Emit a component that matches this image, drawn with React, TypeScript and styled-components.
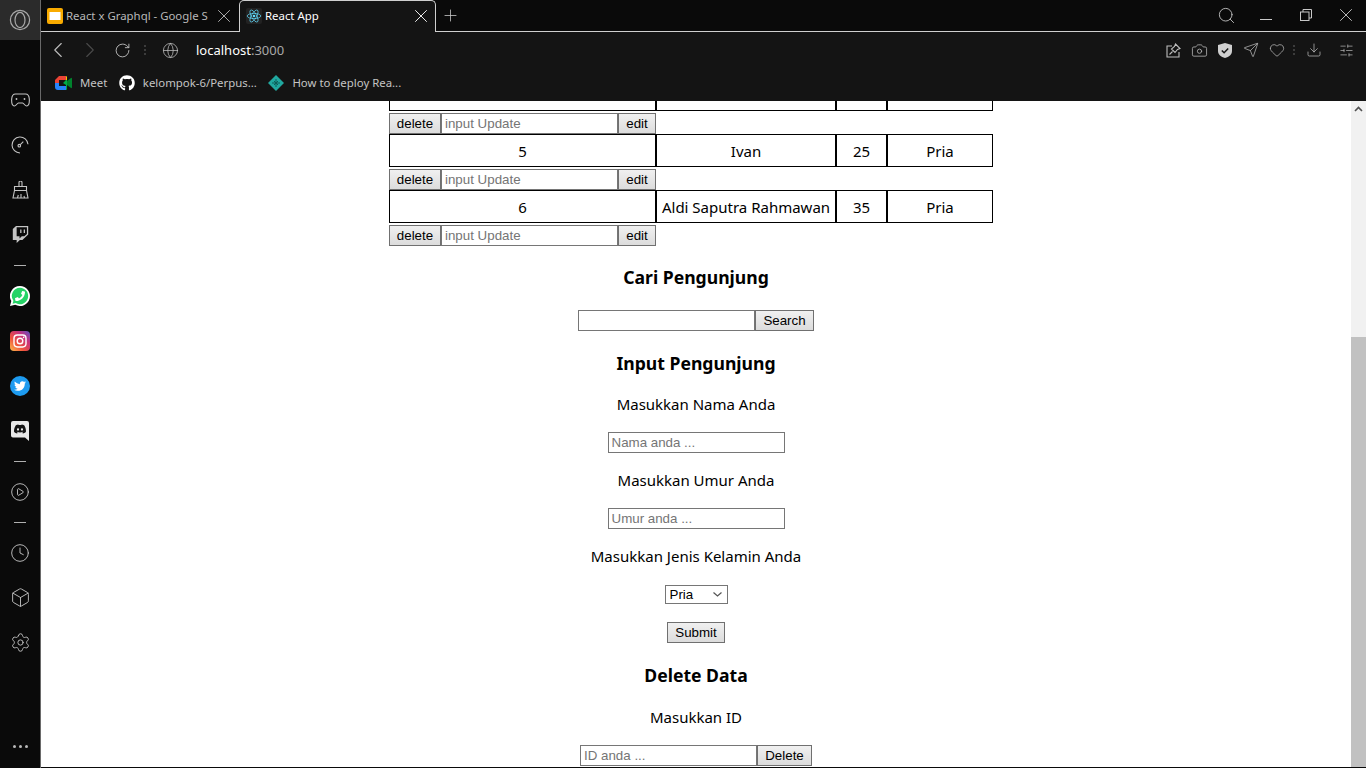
import styled, { createGlobalStyle } from 'styled-components';
import { Fragment } from 'react';
import { ChevronLeft, ChevronRight, RotateCw, Globe, Search, X, Plus, Camera, Send, Heart, Download, SlidersHorizontal, CirclePlay, Clock, Box, Settings } from 'lucide-react';
import { FaGithub, FaTwitch, FaPhoneAlt, FaTwitter, FaDiscord } from 'react-icons/fa';

const GlobalStyle = createGlobalStyle`
  html, body { margin: 0; padding: 0; overflow: hidden; background: #0a0a0a; }
  * { box-sizing: border-box; }
`;

const uiFont = `"Noto Sans", "Open Sans", sans-serif`;
const formFont = `"Liberation Sans", Arial, sans-serif`;

const Frame = styled.div`
  display: flex;
  width: 1366px;
  height: 768px;
  background: #0a0a0a;
  overflow: hidden;
`;

const Sidebar = styled.nav`
  display: flex;
  flex-direction: column;
  align-items: center;
  flex: 0 0 41px;
  height: 768px;
  color: #c4c4c4;
  border-right: 1px solid #6a6a6a;
`;

const LogoBox = styled.div`
  display: flex;
  align-items: center;
  justify-content: center;
  width: 40px;
  height: 40px;
  flex: none;
  margin-bottom: 37px;
  background: #2b2b2b;
`;

const SideSlot = styled.div`
  display: flex;
  align-items: center;
  justify-content: center;
  height: 45px;
  flex: none;
`;

const SideRule = styled.div`
  flex: none;
  height: 16px;
  display: flex;
  align-items: center;
  &::before {
    content: '';
    width: 12px;
    height: 1px;
    background: #b0b0b0;
  }
`;

const SideDots = styled.div`
  display: flex;
  gap: 3px;
  margin-top: auto;
  margin-bottom: 20px;
  & > i {
    width: 3px;
    height: 3px;
    border-radius: 50%;
    background: #b8b8b8;
  }
`;

const Main = styled.div`
  display: flex;
  flex-direction: column;
  flex: 1;
  min-width: 0;
`;

const TabStrip = styled.div`
  display: flex;
  align-items: flex-start;
  height: 31px;
  flex: none;
  background: #0a0a0a;
`;

const Tab = styled.div<{ $active?: boolean }>`
  display: flex;
  align-items: center;
  gap: 3px;
  width: 197px;
  height: ${(p) => (p.$active ? '32px' : '31px')};
  flex: none;
  padding: 0 3px ${(p) => (p.$active ? '2px' : '0')} 6px;
  margin-left: ${(p) => (p.$active ? '1px' : '0')};
  font: 11.4px/16px ${uiFont};
  color: ${(p) => (p.$active ? '#ffffff' : '#b8b8b8')};
  position: relative;
  z-index: 1;
  background: ${(p) => (p.$active ? '#141414' : 'transparent')};
  border: ${(p) => (p.$active ? '1px solid #cfcfcf' : 'none')};
  border-bottom: none;
  border-radius: ${(p) => (p.$active ? '5px 5px 0 0' : '0')};
`;

const TabTitle = styled.span`
  flex: 1;
  min-width: 0;
  overflow: hidden;
  white-space: nowrap;
`;

const NewTab = styled.div`
  display: flex;
  align-items: center;
  justify-content: center;
  width: 28px;
  height: 30px;
  color: #c8c8c8;
`;

const WindowButtons = styled.div`
  display: flex;
  height: 30px;
  margin-left: auto;
  color: #c8c8c8;
`;

const WindowSlot = styled.div`
  display: flex;
  align-items: center;
  justify-content: center;
  width: 40px;
  height: 30px;
`;

const Toolbar = styled.div`
  display: flex;
  align-items: center;
  height: 39px;
  flex: none;
  padding: 0 0 2px 1px;
  background: #141414;
  border-top: 1px solid #cfcfcf;
  color: #bdbdbd;
`;

const NavSlot = styled.div`
  display: flex;
  align-items: center;
  justify-content: center;
  width: 32px;
`;

const Dotted = styled.span<{ $left: number; $right: number }>`
  width: 2px;
  height: 10px;
  flex: none;
  margin: 0 ${(p) => p.$right}px 0 ${(p) => p.$left}px;
  background: repeating-linear-gradient(#3c3c3c 0 2px, transparent 2px 4px);
`;

const Address = styled.div`
  margin-left: 17px;
  font: 13px/18px ${uiFont};
  color: #a8a8a8;
  & > b {
    font-weight: 400;
    color: #ffffff;
  }
`;

const ToolIcons = styled.div`
  display: flex;
  align-items: center;
  margin-left: auto;
`;

const ToolSlot = styled.div<{ $w?: number }>`
  display: flex;
  align-items: center;
  justify-content: center;
  width: ${(p) => p.$w ?? 26}px;
`;

const Bookmarks = styled.div`
  display: flex;
  align-items: center;
  height: 31px;
  flex: none;
  padding: 0 0 6px 14px;
  background: #141414;
  font: 11.4px/16px ${uiFont};
  color: #c4c4c4;
`;

const Bookmark = styled.div`
  display: flex;
  align-items: center;
  gap: 8px;
  margin-right: 11.5px;
  white-space: nowrap;
`;

const Viewport = styled.div`
  display: flex;
  height: 666px;
  flex: none;
  background: #ffffff;
  overflow: hidden;
`;

const Page = styled.main`
  flex: 1;
  min-width: 0;
  font: 15px/21px ${uiFont};
  color: #000000;
  text-align: center;
  overflow: hidden;
`;

const Table = styled.table`
  width: 604px;
  margin: -23px 0 0 348px;
  border-collapse: separate;
  border-spacing: 0;
  table-layout: fixed;
`;

const Cell = styled.td`
  height: 33px;
  padding: 1px 0 0;
  border: 1px solid #000000;
  white-space: nowrap;
  text-align: center;
`;

const ActionCell = styled.td`
  height: 23px;
  padding: 0;
`;

const ActionRow = styled.div`
  display: flex;
  align-items: flex-end;
  height: 23px;
`;

const Heading = styled.h3`
  margin: 18.7px 0;
  font-size: 17.6px;
  line-height: 25px;
  font-weight: 700;
`;

const Label = styled.p<{ $mt?: number }>`
  margin: ${(p) => p.$mt ?? 16}px 0 17px;
  line-height: 19px;
`;

const FieldRow = styled.div<{ $mt?: number; $mb?: number }>`
  display: flex;
  align-items: center;
  justify-content: center;
  height: 23px;
  margin: ${(p) => p.$mt ?? 15}px 0 ${(p) => p.$mb ?? 17}px;
`;

const TextInput = styled.input`
  width: 177px;
  height: 21px;
  padding: 1px 3px;
  border: 1px solid #767676;
  border-radius: 0;
  background: #ffffff;
  outline: none;
  font: 13.33px ${formFont};
  color: #000000;
  &::placeholder { color: #757575; }
`;

const Button = styled.button<{ $w: number }>`
  width: ${(p) => p.$w}px;
  height: 21px;
  padding: 0;
  border: 1px solid #707070;
  border-radius: 0;
  background: linear-gradient(#f0f0f0, #dcdcdc);
  font: 13.33px ${formFont};
  color: #000000;
`;

const Select = styled.select`
  appearance: none;
  width: 63px;
  height: 19px;
  padding: 0 0 0 4px;
  border: 1px solid #767676;
  border-radius: 0;
  background: #ffffff url("data:image/svg+xml,%3Csvg xmlns='http://www.w3.org/2000/svg' width='9' height='5'%3E%3Cpath d='M.5.5l4 3.5 4-3.5' fill='none' stroke='%23555' stroke-width='1.2'/%3E%3C/svg%3E") no-repeat right 5px center;
  font: 13.33px ${formFont};
  color: #000000;
`;

const Scrollbar = styled.div`
  display: flex;
  flex-direction: column;
  flex: 0 0 15px;
  background: #f1f1f1;
`;

const ScrollUp = styled.div`
  display: flex;
  align-items: center;
  justify-content: center;
  height: 15px;
  color: #505050;
`;

const ScrollThumb = styled.div`
  margin-top: 221px;
  flex: 1;
  background: #c1c1c1;
`;

const rows = [
  { id: '', name: '', age: '', sex: '' },
  { id: '5', name: 'Ivan', age: '25', sex: 'Pria' },
  { id: '6', name: 'Aldi Saputra Rahmawan', age: '35', sex: 'Pria' },
];

const OperaLogo = () => (
  <svg width="22" height="22" viewBox="0 0 22 22" fill="none" stroke="#a8a8a8" strokeWidth="1.2">
    <circle cx="11" cy="11" r="9.6" />
    <ellipse cx="11" cy="11" rx="5" ry="7.6" />
  </svg>
);

const SlidesIcon = () => (
  <svg width="16" height="16" viewBox="0 0 16 16" style={{ flex: 'none' }}>
    <rect width="16" height="16" rx="2" fill="#f9ab00" />
    <rect x="2.5" y="4" width="11" height="8" fill="#ffffff" />
  </svg>
);

const ReactIcon = () => (
  <svg width="16" height="16" viewBox="0 0 16 16" fill="none" stroke="#61dafb" strokeWidth="0.7" style={{ flex: 'none' }}>
    <rect width="16" height="16" rx="2" fill="#222222" stroke="none" />
    <circle cx="8" cy="8" r="1.3" fill="#61dafb" stroke="none" />
    <ellipse cx="8" cy="8" rx="6.8" ry="2.6" />
    <ellipse cx="8" cy="8" rx="6.8" ry="2.6" transform="rotate(60 8 8)" />
    <ellipse cx="8" cy="8" rx="6.8" ry="2.6" transform="rotate(120 8 8)" />
  </svg>
);

const MeetIcon = () => (
  <svg width="17" height="14" viewBox="0 0 17 14">
    <path d="M4 0h7v4H4v3H0V4z" fill="#ea4335" />
    <path d="M0 7h4v3h7v4H3a3 3 0 0 1-3-3z" fill="#2684fc" />
    <path d="M4 4h7v6H4z" fill="#141414" />
    <path d="M11 0a1 1 0 0 1 1 1v12a1 1 0 0 1-1 1V9L8 7l3-3z" fill="#00ac47" />
    <path d="M12 5l4-3a.6.6 0 0 1 1 .4v9.2a.6.6 0 0 1-1 .4l-4-3z" fill="#00832d" />
    <path d="M11 0v4h1V1z" fill="#ffba00" />
  </svg>
);

const DeployIcon = () => (
  <svg width="16" height="16" viewBox="0 0 16 16">
    <path d="M8 0l8 8-8 8-8-8z" fill="#20a8a0" />
    <path d="M4 8h8M8 4v8M6 6l4 4M10 6l-4 4" stroke="#0d5f5a" strokeWidth="1" />
  </svg>
);

const GamepadIcon = () => (
  <svg width="19" height="14" viewBox="0 0 19 14" fill="none" stroke="currentColor" strokeWidth="1.1">
    <path d="M4.5 1h10c2 0 3.6 2 3.8 5 .2 3-.6 6.500-2.400 7-1.800.4-2.800-2.800-4.400-3H7.500c-1.600.2-2.600 3.400-4.400 3C1.300 12.500.5 9 .7 6 .9 3 2.500 1 4.500 1z" />
    <circle cx="5.500" cy="6" r="0.9" fill="currentColor" stroke="none" />
    <circle cx="13.500" cy="6" r="0.9" fill="currentColor" stroke="none" />
  </svg>
);

const GaugeDialIcon = () => (
  <svg width="18" height="18" viewBox="0 0 18 18" fill="none" stroke="currentColor" strokeWidth="1.1">
    <path d="M17 8.200A8 8 0 1 0 9 17" />
    <path d="M16.800 11v.1M16 13v.1M14.800 14.700v.1" strokeWidth="1.200" />
    <circle cx="8.300" cy="9.700" r="1.300" />
    <path d="M9.300 8.700l3-3" />
  </svg>
);

const BroomIcon = () => (
  <svg width="17" height="18" viewBox="0 0 17 18" fill="none" stroke="currentColor" strokeWidth="1.1">
    <path d="M7 5V1.500a1.500 1.500 0 0 1 3 0V5" />
    <path d="M2.500 5.500h12v4h-12z" />
    <path d="M2.500 9.500L1 17h15l-1.500-7.500" />
    <path d="M5.500 17l.8-3M9 17v-4M12.500 17l-.5-2" />
  </svg>
);

const WhatsappIcon = () => (
  <svg width="20" height="20" viewBox="0 0 20 20">
    <path d="M10 0a10 10 0 1 1-4.800 18.800L0 20l1.300-5A10 10 0 0 1 10 0z" fill="#ffffff" />
    <path d="M10 1.800a8.200 8.200 0 1 1-4.300 15.200l-3.100.8.800-3A8.200 8.200 0 0 1 10 1.800z" fill="#25d366" />
    <FaPhoneAlt color="#ffffff" size={10} x={5} y={5} style={{ transform: 'scaleX(-1)', transformOrigin: '10px 10px' }} />
  </svg>
);

const InstagramIcon = () => (
  <svg width="20" height="20" viewBox="0 0 20 20">
    <defs>
      <linearGradient id="ig" x1="0" y1="1" x2="1" y2="0">
        <stop offset="0" stopColor="#fdc04e" />
        <stop offset="0.35" stopColor="#f0533c" />
        <stop offset="0.7" stopColor="#c4307f" />
        <stop offset="1" stopColor="#5b54c8" />
      </linearGradient>
    </defs>
    <rect width="20" height="20" rx="4" fill="url(#ig)" />
    <rect x="4" y="4" width="12" height="12" rx="3.4" fill="none" stroke="#fff" strokeWidth="1.4" />
    <circle cx="10" cy="10" r="2.8" fill="none" stroke="#fff" strokeWidth="1.4" />
    <circle cx="13.6" cy="6.4" r="0.8" fill="#fff" />
  </svg>
);

const TwitterIcon = () => (
  <svg width="20" height="20" viewBox="0 0 20 20">
    <circle cx="10" cy="10" r="10" fill="#1d9bf0" />
    <FaTwitter color="#ffffff" size={12} x={4} y={4} />
  </svg>
);

const DiscordIcon = () => (
  <svg width="18" height="20" viewBox="0 0 18 20">
    <path d="M2 0h14a2 2 0 0 1 2 2v18l-4-3.500H2a2 2 0 0 1-2-2V2a2 2 0 0 1 2-2z" fill="#e8e8e8" />
    <FaDiscord color="#141414" size={13} x={2.500} y={1.500} />
  </svg>
);

const PinShareIcon = () => (
  <svg width="15" height="15" viewBox="0 0 15 15" fill="none" stroke="#bdbdbd" strokeWidth="1.1">
    <path d="M6 3H1v11h12V9" />
    <path d="M9.500 1L14 5.500l-2.500 1-2.500 3-3.500-3.500 3-2.500z" />
    <path d="M3.500 11.500L6.500 8.500" />
  </svg>
);

const ShieldCheckIcon = () => (
  <svg width="14" height="15" viewBox="0 0 14 15">
    <path d="M7 0l7 2v6c0 3.500-3 6-7 7-4-1-7-3.500-7-7V2z" fill="#cfcfcf" />
    <path d="M3.800 7.500l2.300 2.300 4.100-4.300" fill="none" stroke="#141414" strokeWidth="1.500" />
  </svg>
);

const MinimizeIcon = () => (
  <svg width="12" height="12" viewBox="0 0 12 12">
    <path d="M0 10.500h12" stroke="currentColor" strokeWidth="1" />
  </svg>
);

const RestoreIcon = () => (
  <svg width="12" height="12" viewBox="0 0 12 12" fill="none" stroke="currentColor" strokeWidth="1">
    <rect x="0.500" y="3" width="8.500" height="8.500" />
    <path d="M3 3V.500h8.500V9H9" />
  </svg>
);

const App = () => (
  <>
    <GlobalStyle />
    <Frame>
      <Sidebar>
        <LogoBox><OperaLogo /></LogoBox>
        <SideSlot><GamepadIcon /></SideSlot>
        <SideSlot><GaugeDialIcon /></SideSlot>
        <SideSlot><BroomIcon /></SideSlot>
        <SideSlot><FaTwitch size={17} /></SideSlot>
        <SideRule />
        <SideSlot><WhatsappIcon /></SideSlot>
        <SideSlot><InstagramIcon /></SideSlot>
        <SideSlot><TwitterIcon /></SideSlot>
        <SideSlot><DiscordIcon /></SideSlot>
        <SideRule />
        <SideSlot><CirclePlay size={20} strokeWidth={1.1} /></SideSlot>
        <SideRule />
        <SideSlot><Clock size={20} strokeWidth={1.1} /></SideSlot>
        <SideSlot><Box size={21} strokeWidth={1.05} /></SideSlot>
        <SideSlot><Settings size={21} strokeWidth={1.05} /></SideSlot>
        <SideDots><i /><i /><i /></SideDots>
      </Sidebar>
      <Main>
        <TabStrip>
          <Tab>
            <SlidesIcon />
            <TabTitle>React x Graphql - Google S</TabTitle>
            <X size={22} strokeWidth={1} />
          </Tab>
          <Tab $active>
            <ReactIcon />
            <TabTitle>React App</TabTitle>
            <X size={22} strokeWidth={1} />
          </Tab>
          <NewTab><Plus size={19} strokeWidth={1} /></NewTab>
          <WindowButtons>
            <WindowSlot><Search size={19} strokeWidth={1.1} /></WindowSlot>
            <WindowSlot><MinimizeIcon /></WindowSlot>
            <WindowSlot><RestoreIcon /></WindowSlot>
            <WindowSlot><X size={22} strokeWidth={1} /></WindowSlot>
          </WindowButtons>
        </TabStrip>
        <Toolbar>
          <NavSlot><ChevronLeft size={26} strokeWidth={1} /></NavSlot>
          <NavSlot><ChevronRight size={26} strokeWidth={1} color="#4a4a4a" /></NavSlot>
          <NavSlot><RotateCw size={17} strokeWidth={1.3} /></NavSlot>
          <Dotted $left={6} $right={16} />
          <Globe size={17} strokeWidth={1.1} />
          <Address><b>localhost</b>:3000</Address>
          <ToolIcons>
            <ToolSlot><PinShareIcon /></ToolSlot>
            <ToolSlot><Camera size={17} strokeWidth={1.1} /></ToolSlot>
            <ToolSlot><ShieldCheckIcon /></ToolSlot>
            <ToolSlot><Send size={16} strokeWidth={1.1} /></ToolSlot>
            <ToolSlot><Heart size={16} strokeWidth={1.1} /></ToolSlot>
            <Dotted $left={3} $right={6} />
            <ToolSlot><Download size={16} strokeWidth={1.1} /></ToolSlot>
            <ToolSlot $w={39}><SlidersHorizontal size={15} strokeWidth={1.1} /></ToolSlot>
          </ToolIcons>
        </Toolbar>
        <Bookmarks>
          <Bookmark><MeetIcon /><span>Meet</span></Bookmark>
          <Bookmark><FaGithub size={16} color="#ffffff" /><span>kelompok-6/Perpus...</span></Bookmark>
          <Bookmark><DeployIcon /><span>How to deploy Rea...</span></Bookmark>
        </Bookmarks>
        <Viewport>
          <Page>
            <Table>
              <colgroup>
                <col width="267" />
                <col width="180" />
                <col width="51" />
                <col width="106" />
              </colgroup>
              <tbody>
                {rows.map((row, i) => (
                  <Fragment key={i}>
                    <tr>
                      <Cell>{row.id}</Cell>
                      <Cell>{row.name}</Cell>
                      <Cell>{row.age}</Cell>
                      <Cell>{row.sex}</Cell>
                    </tr>
                    <tr>
                      <ActionCell colSpan={4}>
                        <ActionRow>
                          <Button $w={52}>delete</Button>
                          <TextInput placeholder="input Update" />
                          <Button $w={38}>edit</Button>
                        </ActionRow>
                      </ActionCell>
                    </tr>
                  </Fragment>
                ))}
              </tbody>
            </Table>
            <Heading>Cari Pengunjung</Heading>
            <FieldRow $mt={19.7} $mb={18.7}>
              <TextInput />
              <Button $w={59}>Search</Button>
            </FieldRow>
            <Heading>Input Pengunjung</Heading>
            <Label>Masukkan Nama Anda</Label>
            <FieldRow $mt={16}><TextInput placeholder="Nama anda ..." /></FieldRow>
            <Label>Masukkan Umur Anda</Label>
            <FieldRow $mt={16}><TextInput placeholder="Umur anda ..." /></FieldRow>
            <Label>Masukkan Jenis Kelamin Anda</Label>
            <FieldRow $mt={16} $mb={15}>
              <Select defaultValue="Pria">
                <option>Pria</option>
                <option>Wanita</option>
              </Select>
            </FieldRow>
            <FieldRow $mb={19.7}><Button $w={58}>Submit</Button></FieldRow>
            <Heading>Delete Data</Heading>
            <Label $mt={19.7}>Masukkan ID</Label>
            <FieldRow $mt={16}>
              <TextInput placeholder="ID anda ..." />
              <Button $w={55}>Delete</Button>
            </FieldRow>
          </Page>
          <Scrollbar>
            <ScrollUp>
              <svg width="9" height="6" viewBox="0 0 9 6" fill="none" stroke="currentColor" strokeWidth="1.6"><path d="M1 5l3.5-3.5L8 5" /></svg>
            </ScrollUp>
            <ScrollThumb />
          </Scrollbar>
        </Viewport>
      </Main>
    </Frame>
  </>
);

export default App;
